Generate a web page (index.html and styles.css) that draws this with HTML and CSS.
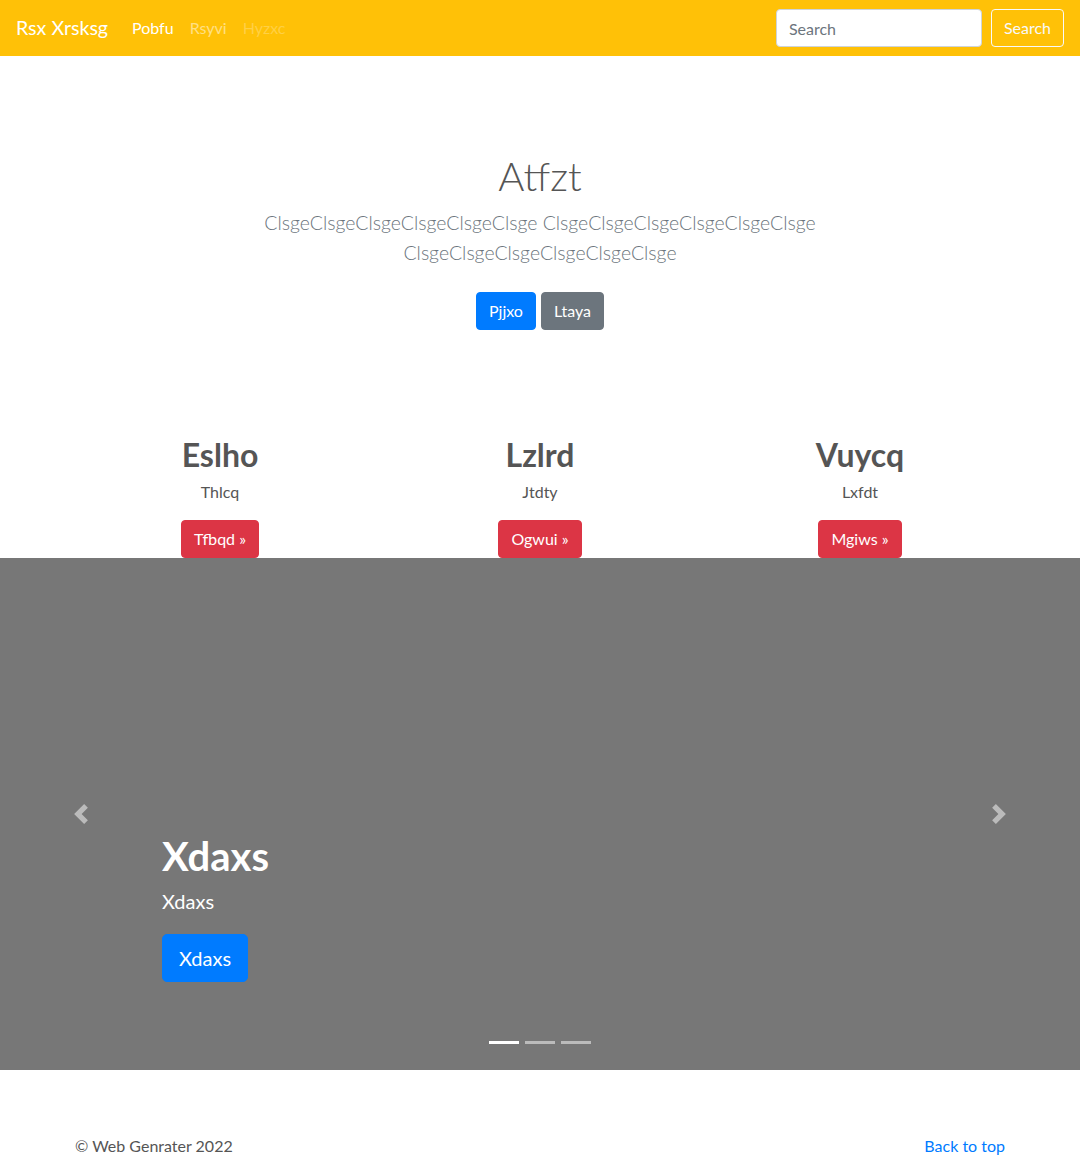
FILE: index.html
```html
<!DOCTYPE html>
<html lang="en">
<head>
<meta charset="utf-8">
<title>Rsx Xrsksg</title>
<link rel="stylesheet" href="styles.css">
</head>
<body>
<header class="navbar">
  <div class="nav-left">
    <a class="brand" href="#">Rsx Xrsksg</a>
    <nav class="nav-links">
      <a class="nav-link active" href="#">Pobfu</a>
      <a class="nav-link" href="#">Rsyvi</a>
      <a class="nav-link disabled" href="#">Hyzxc</a>
    </nav>
  </div>
  <form class="search-form">
    <input class="search-input" type="text" placeholder="Search">
    <button class="btn btn-outline-light" type="button">Search</button>
  </form>
</header>

<main>
  <section class="jumbotron">
    <div class="jumbo-inner">
      <h1 class="jumbo-title">Atfzt</h1>
      <p class="lead">ClsgeClsgeClsgeClsgeClsgeClsge ClsgeClsgeClsgeClsgeClsgeClsge ClsgeClsgeClsgeClsgeClsgeClsge</p>
      <div class="jumbo-actions">
        <a class="btn btn-primary" href="#">Pjjxo</a>
        <a class="btn btn-secondary" href="#">Ltaya</a>
      </div>
    </div>
  </section>

  <section class="container marketing">
    <div class="col">
      <h2 class="col-title">Eslho</h2>
      <p class="col-text">Thlcq</p>
      <a class="btn btn-danger" href="#">Tfbqd &raquo;</a>
    </div>
    <div class="col">
      <h2 class="col-title">Lzlrd</h2>
      <p class="col-text">Jtdty</p>
      <a class="btn btn-danger" href="#">Ogwui &raquo;</a>
    </div>
    <div class="col">
      <h2 class="col-title">Vuycq</h2>
      <p class="col-text">Lxfdt</p>
      <a class="btn btn-danger" href="#">Mgiws &raquo;</a>
    </div>
  </section>

  <section class="carousel">
    <a class="carousel-control prev" href="#" aria-label="Previous">
      <svg class="control-icon" viewBox="0 0 8 8" width="20" height="20"><path d="M5.25 0l-4 4 4 4 1.5-1.5L4.25 4l2.5-2.5L5.25 0z"/></svg>
    </a>
    <div class="carousel-caption">
      <h1 class="caption-title">Xdaxs</h1>
      <p class="caption-text">Xdaxs</p>
      <div class="caption-action"><a class="btn btn-primary btn-lg" href="#">Xdaxs</a></div>
    </div>
    <a class="carousel-control next" href="#" aria-label="Next">
      <svg class="control-icon" viewBox="0 0 8 8" width="20" height="20"><path d="M2.75 0l-1.5 1.5L3.75 4l-2.5 2.5L2.75 8l4-4-4-4z"/></svg>
    </a>
    <ol class="indicators">
      <li class="indicator active"></li>
      <li class="indicator"></li>
      <li class="indicator"></li>
    </ol>
  </section>
</main>

<footer class="container footer">
  <p class="footer-copy">&copy; Web Genrater 2022</p>
  <a class="footer-link" href="#">Back to top</a>
</footer>
</body>
</html>
```
FILE: styles.css
```css
* { box-sizing: border-box; }
html, body { margin: 0; padding: 0; }
body {
  font-family: "Lato", "Open Sans", sans-serif;
  font-size: 16px;
  line-height: 1.5;
  color: #555;
  background: #fff;
}
a { text-decoration: none; }
p, h1, h2 { margin: 0; }

/* Navbar */
.navbar {
  height: 56px;
  background: #ffc107;
  padding: 8px 16px;
  display: flex;
  align-items: center;
  justify-content: space-between;
}
.nav-left { display: flex; align-items: center; }
.brand {
  color: #fff;
  font-size: 19.6px;
  line-height: 30px;
  padding: 5px 0;
  margin-right: 16px;
}
.nav-links { display: flex; }
.nav-link {
  color: rgba(255,255,255,.5);
  padding: 8px;
  line-height: 24px;
}
.nav-link.active { color: #fff; }
.nav-link.disabled { color: rgba(255,255,255,.25); }
.search-form { display: flex; align-items: center; gap: 9px; }
.search-input {
  width: 206px;
  height: 38px;
  padding: 6px 12px;
  font: inherit;
  color: #495057;
  background: #fff;
  border: 1px solid #ced4da;
  border-radius: 4px;
  outline: none;
}
.search-input::placeholder { color: #6c757d; }

/* Buttons */
.btn {
  display: inline-block;
  font-family: inherit;
  font-size: 16px;
  line-height: 24px;
  padding: 6px 12px;
  border: 1px solid transparent;
  border-radius: 4px;
  color: #fff;
  background: transparent;
  cursor: pointer;
}
.btn-outline-light { color: #f8f9fa; border-color: #f8f9fa; }
.btn-primary { background: #007bff; border-color: #007bff; }
.btn-secondary { background: #6c757d; border-color: #6c757d; }
.btn-danger { background: #dc3545; border-color: #dc3545; }
.btn-lg { font-size: 20px; line-height: 30px; padding: 8px 16px; border-radius: 5px; }

/* Jumbotron */
.jumbotron { padding: 96px 0; text-align: center; }
.jumbo-inner { max-width: 640px; margin: 0 auto; padding: 0 15px; }
.jumbo-title { font-size: 40px; font-weight: 300; line-height: 48px; margin-bottom: 8px; color: #555; }
.lead { font-size: 19.45px; font-weight: 300; line-height: 30px; color: #6c757d; margin-bottom: 16px; }
.jumbo-actions { display: flex; justify-content: center; gap: 5px; padding: 8px 0; }

/* Marketing */
.container { max-width: 960px; margin: 0 auto; padding: 0 15px; }
.marketing { display: flex; padding: 0; }
.col { flex: 1; text-align: center; padding: 0 15px; }
.col-title { font-size: 32px; font-weight: 700; line-height: 38px; padding-top: 2px; margin-bottom: 6px; color: #555; }
.col-text { margin-bottom: 16px; }

/* Carousel */
.carousel { position: relative; height: 512px; background: #777; }
.carousel-caption {
  position: absolute;
  left: 15%;
  right: 15%;
  bottom: 48px;
  padding: 20px 0;
  color: #fff;
  text-align: left;
}
.caption-title { font-size: 40px; font-weight: 700; line-height: 48px; margin-bottom: 8px; }
.caption-text { font-size: 20px; line-height: 26px; margin-bottom: 20px; }
.caption-action { margin-bottom: 20px; }
.carousel-control {
  position: absolute;
  top: 0;
  bottom: 0;
  width: 15%;
  display: flex;
  align-items: center;
  justify-content: center;
  opacity: .5;
}
.carousel-control.prev { left: 0; }
.carousel-control.next { right: 0; }
.control-icon { fill: #fff; display: block; }
.indicators {
  position: absolute;
  left: 15%;
  right: 15%;
  bottom: 26px;
  margin: 0;
  padding: 0;
  list-style: none;
  display: flex;
  justify-content: center;
  gap: 6px;
}
.indicator { width: 30px; height: 3px; background: #fff; opacity: .5; }
.indicator.active { opacity: 1; }

/* Footer */
.footer {
  display: flex;
  justify-content: space-between;
  padding-top: 64px;
  padding-bottom: 16px;
}
.footer-link { color: #007bff; }
```
